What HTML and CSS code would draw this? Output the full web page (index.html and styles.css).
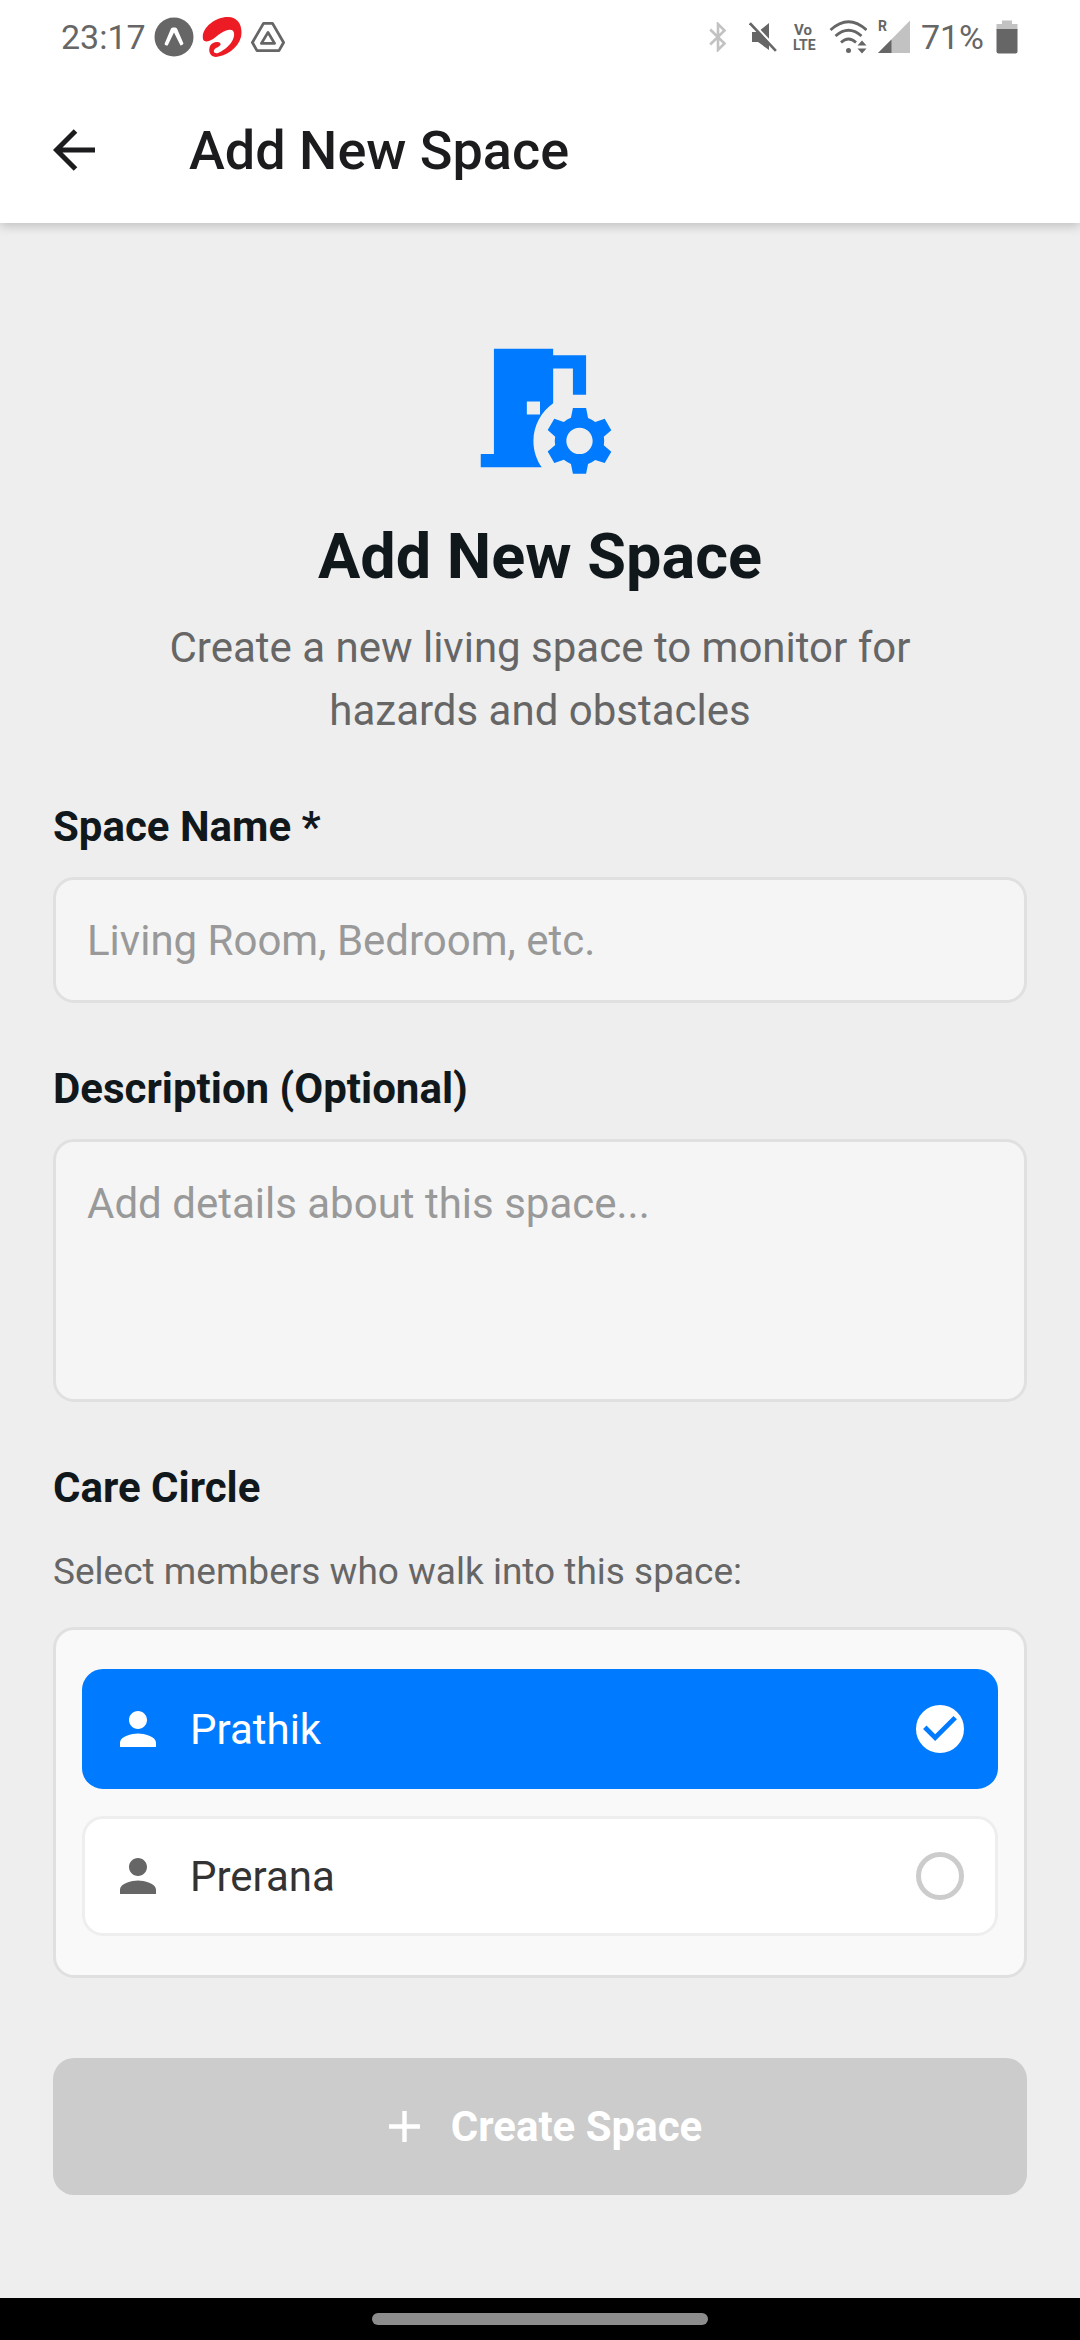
FILE: index.html
```html
<!DOCTYPE html>
<html lang="en">
<head>
<meta charset="utf-8">
<meta name="viewport" content="width=device-width, initial-scale=1">
<title>Add New Space</title>
<link rel="stylesheet" href="styles.css">
</head>
<body>
<div class="top">
  <div class="status">
    <div class="status-group">
      <span>23:17</span>
      <svg class="status-expo" viewBox="0 0 40 40" width="40" height="40" aria-hidden="true">
        <circle cx="20" cy="20" r="19.5" fill="#666"/>
        <path d="M10.5 27 16.8 12Q17.4 10.500 18.7 10.500H21.3Q22.6 10.500 23.2 12L29.5 26.500Q28.500 28.500 26.500 28.500L20 15.500 13.700 28.500Q11.400 29 10.500 27Z" fill="#fff"/>
      </svg>
      <svg viewBox="0 0 40 40" width="40" height="40" aria-hidden="true">
        <path d="M1 22C-1 12 12 0 26 0C37 0 41 10 39 20C36 32 23 39 14 40C8 40 6 34 8 29C10 25 16 24 18 26C20 28 17 30 14 31C10 34 12 37 16 36C23 33 31 26 32 19C33 12 28 12 23 14C17 16 13 22 7 24C4 25 1 24 1 22Z" fill="#ed1c24"/>
      </svg>
      <svg class="status-tri" viewBox="0 0 36 32" width="36" height="32" fill="none" stroke="#666" stroke-width="2.8" stroke-linejoin="round" aria-hidden="true">
        <path d="M13.5 2.4H22.5L33.6 21.5 29 29.6H7L2.4 21.5Z"/>
        <path d="M18 11.4 24.6 22.4H11.4Z"/>
      </svg>
    </div>
    <div class="status-group status-right">
      <svg viewBox="0 0 18 30" width="18" height="30" fill="none" stroke="#c2c2c2" stroke-width="2.6" aria-hidden="true">
        <path d="M1.2 7.5 15.5 21.5 9 28V2L15.5 8.5 1.2 22.5"/>
      </svg>
      <svg class="status-mute" viewBox="0 0 28 30" width="28" height="30" aria-hidden="true">
        <path d="M3 10V20H9L20 28V1L9 10Z" fill="#666"/>
        <path d="M2.4-.2 28.4 27.4" stroke="#fff" stroke-width="2.4"/>
        <path d="M.9 1.2 26.9 28.8" stroke="#666" stroke-width="2.6"/>
      </svg>
      <svg class="status-lte" viewBox="0 -4 26 38" width="26" height="38" font-size="15" font-weight="700" fill="#666" aria-hidden="true">
        <text x="1" y="13">Vo</text>
        <text x="0" y="28" font-size="14">LTE</text>
      </svg>
      <svg viewBox="0 0 38 34" width="38" height="34" fill="none" stroke="#666" stroke-width="2.8" aria-hidden="true">
        <path d="M1.5 10Q19.5-6.5 37.500 10M6.500 16Q19.500 4.500 32.500 16M12 22.500Q19.500 15.500 27 22.500"/>
        <circle cx="19.500" cy="30.500" r="2.500" fill="#666" stroke="none"/>
        <path d="M33 20.500 37.500 25.500H28.500ZM28.500 28.500H37.500L33 33.500Z" fill="#666" stroke="none"/>
      </svg>
      <svg viewBox="0 -6 34 46" width="34" height="46" aria-hidden="true">
        <path d="M33 0.500V33H1Z" fill="#c2c2c2"/>
        <path d="M14.500 19.500V33H1Z" fill="#666"/>
        <text x="1" y="11" font-size="14" font-weight="700" fill="#666">R</text>
      </svg>
      <span>71%</span>
      <svg class="status-battery" viewBox="0 0 22 34" width="22" height="34" aria-hidden="true">
        <path d="M6 0.500H16V4H21.500V10H.500V4H6Z" fill="#c2c2c2"/>
        <path d="M.500 9H21.500V31.500Q21.500 33.500 19.500 33.500H2.500Q.500 33.500 .500 31.500Z" fill="#666"/>
      </svg>
    </div>
  </div>
  <header class="appbar">
    <button class="back" type="button" aria-label="Back">
      <svg viewBox="0 0 42 42" width="42" height="42" fill="none" stroke="#1c1c1e" stroke-width="5" aria-hidden="true">
        <path d="M22.500 2 3.500 21 22.500 40M3.500 21H42"/>
      </svg>
    </button>
    <span class="appbar-title">Add New Space</span>
  </header>
</div>

<main class="page">
  <section class="hero">
    <svg class="hero-icon" viewBox="0 0 24 24" fill="#007bff" aria-hidden="true">
      <path fill-rule="evenodd" d="M14 11.260V6h3v4h2V4h-5V3H5v16H3v2h9.260C11.470 19.870 11 18.490 11 17c0-2.380 1.190-4.470 3-5.740zM10 11h2v2h-2z"/>
      <path fill-rule="evenodd" d="M21.690 16.370l1.140-1-1-1.730-1.450.490c-.320-.270-.680-.480-1.080-.630L19 12h-2l-.300 1.490c-.400.150-.760.360-1.080.630l-1.450-.490-1 1.730 1.140 1c-.080.500-.080.760 0 1.260l-1.140 1 1 1.730 1.450-.490c.320.270.680.480 1.080.630L17 22h2l.300-1.490c.400-.150.760-.360 1.080-.630l1.450.490 1-1.730-1.140-1c.080-.500.080-.760 0-1.260zM18 19c-1.100 0-2-.900-2-2s.900-2 2-2 2 .900 2 2-.900 2-2 2z"/>
    </svg>
    <h1 class="hero-title">Add New Space</h1>
    <p class="hero-text">Create a new living space to monitor for hazards and obstacles</p>
  </section>

  <form class="form">
    <div class="field">
      <label class="label" for="space-name">Space Name *</label>
      <input class="control" id="space-name" type="text" placeholder="Living Room, Bedroom, etc.">
    </div>
    <div class="field">
      <label class="label" for="description">Description (Optional)</label>
      <textarea class="control control-area" id="description" placeholder="Add details about this space..."></textarea>
    </div>
    <fieldset class="circle">
      <legend class="label">Care Circle</legend>
      <p class="hint">Select members who walk into this space:</p>
      <div class="members">
        <label class="member">
          <svg class="person" viewBox="0 0 24 24" aria-hidden="true"><path d="M12 12c2.210 0 4-1.790 4-4s-1.790-4-4-4-4 1.790-4 4 1.790 4 4 4zm0 2c-2.670 0-8 1.340-8 4v2h16v-2c0-2.660-5.330-4-8-4z"/></svg>
          <span class="member-name">Prathik</span>
          <span class="tick">
            <input class="tick-box" type="checkbox" checked>
            <svg class="tick-mark" viewBox="0 0 24 24" aria-hidden="true"><path d="M10 17l-5-5 1.410-1.410L10 14.170l7.590-7.590L19 8z"/></svg>
          </span>
        </label>
        <label class="member">
          <svg class="person" viewBox="0 0 24 24" aria-hidden="true"><path d="M12 12c2.210 0 4-1.790 4-4s-1.790-4-4-4-4 1.790-4 4 1.790 4 4 4zm0 2c-2.670 0-8 1.340-8 4v2h16v-2c0-2.660-5.330-4-8-4z"/></svg>
          <span class="member-name">Prerana</span>
          <span class="tick">
            <input class="tick-box" type="checkbox">
            <svg class="tick-mark" viewBox="0 0 24 24" aria-hidden="true"><path d="M10 17l-5-5 1.410-1.410L10 14.170l7.590-7.590L19 8z"/></svg>
          </span>
        </label>
      </div>
    </fieldset>
    <button class="submit" type="submit" disabled>
      <svg viewBox="0 0 24 24" width="53" height="53" fill="#fff" aria-hidden="true"><path d="M19 13h-6v6h-2v-6H5v-2h6V5h2v6h6z"/></svg>
      <span>Create Space</span>
    </button>
  </form>
</main>

<div class="navbar"><div class="navbar-pill"></div></div>
</body>
</html>
```
FILE: styles.css
```css
* {
  box-sizing: border-box;
}

body {
  margin: 0;
  min-height: 100vh;
  display: flex;
  flex-direction: column;
  background: #eee;
  color: #11181c;
  font-family: Roboto, sans-serif;
  font-size: 42px;
}

svg {
  display: block;
  flex: none;
}

/* Status bar and app bar */
.top {
  background: #fff;
  box-shadow: 0 3px 10px rgba(0, 0, 0, 0.2);
}

.status {
  display: flex;
  justify-content: space-between;
  height: 74px;
  padding: 0 62px 0 61px;
  color: #666;
  font-size: 34px;
}

.status-group {
  display: flex;
  align-items: center;
  gap: 8px;
}

.status-right {
  gap: 10px;
}

.status-mute {
  margin-left: 12px;
}

.status-lte {
  margin-left: 6px;
}

.status-battery {
  margin-left: 2px;
}

.appbar {
  display: flex;
  align-items: center;
  gap: 94px;
  height: 149px;
  padding: 3px 53px 0;
}

.back {
  padding: 0;
  border: 0;
  background: none;
}

.appbar-title {
  color: #1c1c1e;
  font-size: 54px;
  font-weight: 500;
  line-height: 63px;
}

/* Page content */
.page {
  flex: 1;
  padding: 106px 53px 102px;
}

.hero {
  display: flex;
  flex-direction: column;
  align-items: center;
  text-align: center;
}

.hero-icon {
  width: 158px;
  height: 158px;
}

.hero-title {
  margin: 28px 0 17px;
  font-size: 63px;
  font-weight: 700;
  line-height: 84px;
}

.hero-text {
  max-width: 840px;
  margin: 0;
  color: #666;
  line-height: 63px;
}

.form {
  display: flex;
  flex-direction: column;
  gap: 54px;
  margin-top: 53px;
}

.field {
  display: flex;
  flex-direction: column;
  gap: 19px;
}

.label {
  padding: 0;
  font-weight: 700;
  line-height: 63px;
}

.control {
  width: 100%;
  height: 126px;
  padding: 0 31px;
  border: 3px solid #e0e0e0;
  border-radius: 21px;
  background: #f5f5f5;
  color: #11181c;
  font: inherit;
}

.control::placeholder {
  color: #999;
  opacity: 1;
}

.control-area {
  display: block;
  height: 263px;
  padding: 37px 31px;
  resize: none;
}

/* Care circle */
.circle {
  min-width: 0;
  margin: 0;
  padding: 0;
  border: 0;
}

.hint {
  margin: 21px 0 24px;
  color: #666;
  font-size: 37px;
  line-height: 63px;
}

.members {
  display: flex;
  flex-direction: column;
  gap: 27px;
  padding: 39px 26px;
  border: 3px solid #e0e0e0;
  border-radius: 21px;
  background: #f9f9f9;
}

.member {
  display: flex;
  align-items: center;
  gap: 25px;
  height: 120px;
  padding: 0 26px;
  border: 3px solid #eee;
  border-radius: 21px;
  background: #fff;
  color: #333;
}

.member:has(:checked) {
  border-color: #007bff;
  background: #007bff;
  color: #fff;
}

.person {
  width: 54px;
  height: 54px;
  fill: #666;
}

.member:has(:checked) .person {
  fill: #fff;
}

.member-name {
  flex: 1;
}

.tick {
  display: grid;
  place-items: center;
}

.tick-box,
.tick-mark {
  grid-area: 1 / 1;
}

.tick-box {
  appearance: none;
  width: 48px;
  height: 48px;
  margin: 0 5px;
  border: 5px solid #ccc;
  border-radius: 50%;
}

.tick-box:checked {
  border-color: #fff;
  background: #fff;
}

.tick-mark {
  width: 58px;
  height: 58px;
  fill: none;
  pointer-events: none;
}

.tick-box:checked + .tick-mark {
  fill: #007bff;
}

.submit {
  display: flex;
  align-items: center;
  justify-content: center;
  gap: 20px;
  height: 137px;
  margin-top: 26px;
  padding: 0 53px;
  border: 0;
  border-radius: 21px;
  background: #ccc;
  color: #fff;
  font: inherit;
  font-weight: 700;
}

/* System navigation bar */
.navbar {
  display: flex;
  align-items: center;
  justify-content: center;
  height: 42px;
  background: #000;
}

.navbar-pill {
  width: 336px;
  height: 12px;
  border-radius: 6px;
  background: #8c8c8c;
}
```
